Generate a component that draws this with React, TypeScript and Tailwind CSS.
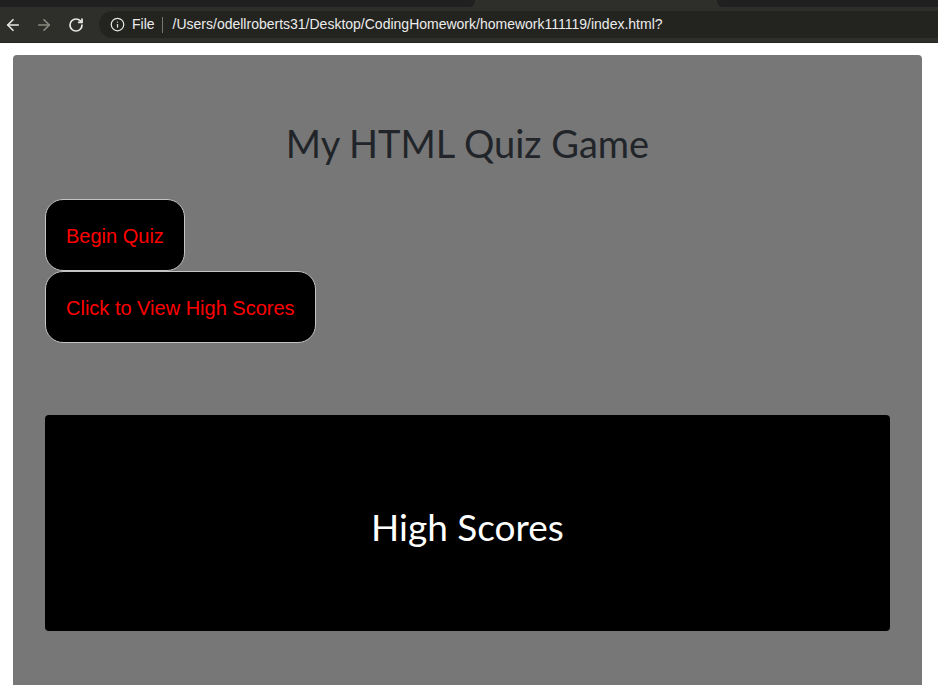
import React from 'react';
import { ArrowLeft, ArrowRight, RotateCw, Info } from 'lucide-react';

const BrowserBar: React.FC = () => {
    return (
        <div className="w-full">
            {/* tab strip */}
            <div className="flex h-[7px] bg-[#2e2f2a]">
                <div className="w-[475px] bg-[#202020] rounded-br-md" />
                <div className="flex-1" />
                <div className="w-[221px] bg-[#202020] rounded-bl-md" />
            </div>
            {/* toolbar */}
            <div className="flex items-center h-[36px] bg-[#2e2f2a] border-b border-[#23241f] font-['Liberation_Sans',sans-serif]">
                <ArrowLeft className="ml-[4px] w-[18px] h-[18px] text-[#e6e6e6]" strokeWidth={2.2} />
                <ArrowRight className="ml-[13px] w-[18px] h-[18px] text-[#8a8b80]" strokeWidth={2.2} />
                <RotateCw className="ml-[15px] w-[16px] h-[16px] text-[#e6e6e6]" strokeWidth={2.6} />
                <div className="ml-[15px] flex-1 flex items-center h-[27px] rounded-l-full bg-[#232420] pl-[11px]">
                    <Info className="w-[15px] h-[15px] text-[#e6e6e6]" strokeWidth={2} />
                    <span className="ml-[7px] text-[14px] text-[#ececec]">File</span>
                    <span className="ml-[7px] w-px h-[16px] bg-[#777]" />
                    <span className="ml-[10px] text-[14px] text-[#ececec]">/Users/odellroberts31/Desktop/CodingHomework/homework111119/index.html?</span>
                </div>
            </div>
        </div>
    );
};

const App: React.FC = () => {
    return (
        <div className="min-h-screen bg-white">
            <BrowserBar />
            <div className="ml-[13px] mr-[16px] mt-[12px] min-h-[630px] rounded-t bg-[#777777] px-8 pt-[64px]">
                <h1 className="text-center text-[38px] leading-[48px] text-[#212529] font-['Lato',sans-serif]">
                    My HTML Quiz Game
                </h1>

                <div className="mt-[32px] flex flex-col items-start">
                    <button className="h-[72px] pt-[3px] bg-black text-[#ff0000] text-[20px] leading-[23px] px-5 rounded-[18px] border border-[#c4c4c4] font-['Liberation_Sans',sans-serif]">
                        Begin Quiz
                    </button>
                    <button className="h-[72px] pt-[2px] bg-black text-[#ff0000] text-[20px] leading-[23px] px-5 rounded-[18px] border border-[#c4c4c4] font-['Liberation_Sans',sans-serif]">
                        Click to View High Scores
                    </button>
                </div>

                <div className="mt-[72px] h-[216px] flex items-center justify-center rounded bg-black pt-[8px]">
                    <h2 className="text-white text-[37px] leading-[48px] font-['Lato',sans-serif]">High Scores</h2>
                </div>
            </div>
        </div>
    );
};

export default App;
